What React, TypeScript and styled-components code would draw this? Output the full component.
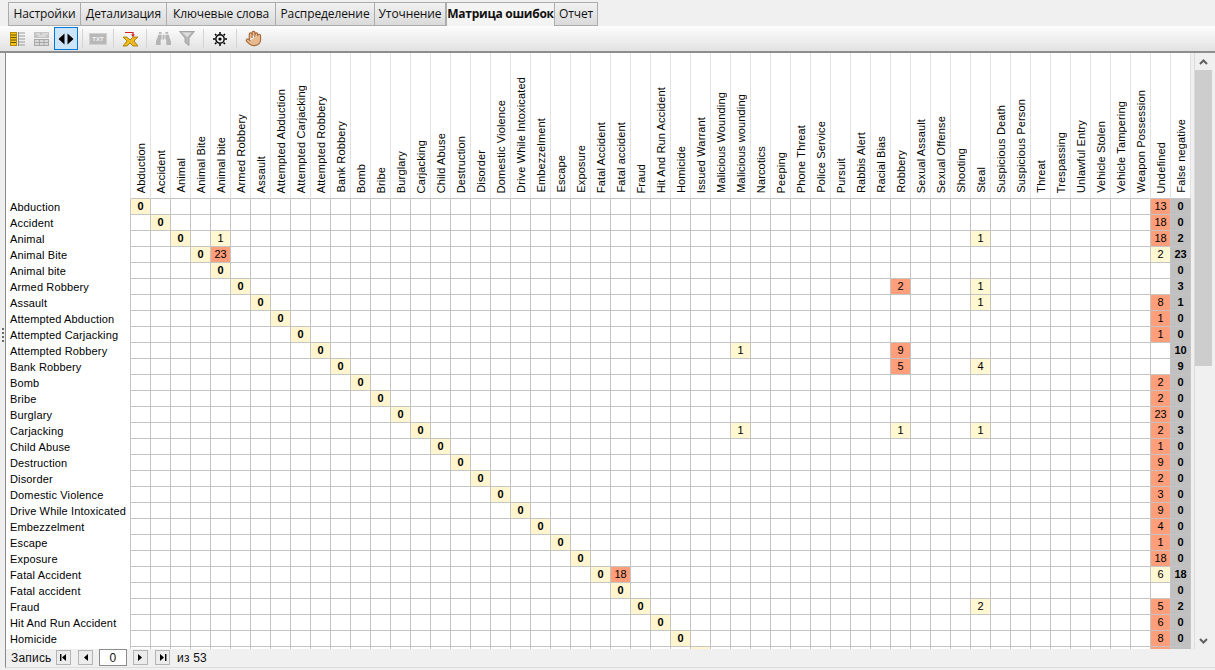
// App.tsx
import React from 'react';
import styled, { createGlobalStyle } from 'styled-components';
import { Hand } from 'lucide-react';
import { FaBinoculars } from 'react-icons/fa';

const GlobalStyle = createGlobalStyle`
  html, body {
    margin: 0;
    padding: 0;
    height: 100%;
    background: #f0f0f0;
    overflow: hidden;
  }
`;

const Page = styled.div`
  width: 1215px;
  height: 670px;
  display: flex;
  flex-direction: column;
  background: #f0f0f0;
  color: #000;
  font-family: "Liberation Sans", Arial, sans-serif;
  overflow: hidden;
`;

const TabBar = styled.div`
  display: flex;
  height: 24px;
  padding: 2px 0 0 8px;
  box-sizing: content-box;
`;

const Tab = styled.div<{ $active?: boolean; $width: number }>`
  width: ${({ $width }) => $width}px;
  box-sizing: border-box;
  height: 24px;
  border: 1px solid #acacac;
  border-left-width: ${({ $active }) => ($active ? 1 : 0)}px;
  border-bottom-width: ${({ $active }) => ($active ? 0 : 1)}px;
  background: ${({ $active }) => ($active ? '#f4f4f4' : 'linear-gradient(#f2f2f2, #dadada)')};
  font-family: "Open Sans", sans-serif;
  font-size: 12px;
  font-weight: ${({ $active }) => ($active ? 700 : 400)};
  letter-spacing: ${({ $active }) => ($active ? '-0.25px' : '-0.1px')};
  line-height: 22px;
  text-align: center;
  white-space: nowrap;
  color: #111;

  &:first-child {
    border-left-width: 1px;
  }
`;

const Toolbar = styled.div`
  display: flex;
  align-items: center;
  height: 25px;
  padding-left: 6px;
  background: linear-gradient(#fdfdfd, #e2e2e2);
  border-bottom: 2px solid #8e8e8e;
`;

const ToolButton = styled.div<{ $active?: boolean; $width?: number }>`
  width: ${({ $width }) => $width ?? 24}px;
  height: 23px;
  box-sizing: border-box;
  display: flex;
  align-items: center;
  justify-content: center;
  border: ${({ $active }) => ($active ? '1px solid #0078d7' : '1px solid transparent')};
  background: ${({ $active }) => ($active ? '#cce4f7' : 'transparent')};
`;

const ToolSeparator = styled.div<{ $gap?: number }>`
  width: 1px;
  height: 19px;
  margin: 0 ${({ $gap }) => $gap ?? 4}px;
  background: #d4d4d4;
`;

const TxtBadge = styled.div`
  width: 16px;
  height: 10px;
  background: #b8b8b8;
  border: 1px solid #d0d0d0;
  color: #f4f4f4;
  font-size: 6px;
  font-weight: 700;
  line-height: 10px;
  text-align: center;
`;

const Body = styled.div`
  flex: 1;
  display: flex;
  min-height: 0;
`;

const Gutter = styled.div`
  width: 6px;
  padding: 275px 0 0 2px;
  box-sizing: border-box;
  display: flex;
  flex-direction: column;
  gap: 2px;
`;

const GripDot = styled.div`
  width: 2px;
  height: 2px;
  background: #6a6a6a;
`;

const Content = styled.div`
  width: 1209px;
  height: 614px;
  display: flex;
  flex-direction: column;
  border-left: 1px solid #8a8a8a;
  border-bottom: 1px solid #dcdcdc;
`;

const Main = styled.div`
  height: 596px;
  display: flex;
  background: #fff;
  overflow: hidden;
`;

const Matrix = styled.div`
  width: 1185px;
  display: grid;
  grid-template-columns: 125px repeat(53, 20px);
  grid-template-rows: 146px;
  grid-auto-rows: 16px;
  overflow: hidden;
  font-size: 11px;
  letter-spacing: 0.15px;
`;

const Corner = styled.div`
  border-right: 1px solid #e2e2e2;
`;

const ColumnHead = styled.div`
  box-sizing: border-box;
  display: flex;
  align-items: center;
  justify-content: flex-end;
  flex-direction: column;
  padding-bottom: 5px;
  border-right: 1px solid #e2e2e2;
  border-bottom: 1px solid #c4c4c4;
  overflow: hidden;
`;

const ColumnTitle = styled.span`
  writing-mode: vertical-rl;
  transform: rotate(180deg);
  white-space: nowrap;
  line-height: 18px;
`;

const RowLabel = styled.div`
  box-sizing: border-box;
  padding-left: 4px;
  line-height: 16px;
  white-space: nowrap;
  overflow: hidden;
  border-right: 1px solid #c4c4c4;
`;

type Tone = 'plain' | 'diag' | 'low' | 'high' | 'miss';

const toneColors: Record<Tone, string> = {
  plain: '#fff',
  diag: '#fff6cf',
  low: '#fff8d2',
  high: '#ff9e7a',
  miss: '#c0c0c0',
};

const Cell = styled.div<{ $tone: Tone }>`
  box-sizing: border-box;
  border-right: 1px solid #c4c4c4;
  border-bottom: 1px solid #c4c4c4;
  background: ${({ $tone }) => toneColors[$tone]};
  font-weight: ${({ $tone }) => ($tone === 'diag' || $tone === 'miss' ? 700 : 400)};
  line-height: 15px;
  text-align: center;
  white-space: nowrap;
  letter-spacing: 0;
`;

const Scrollbar = styled.div`
  width: 24px;
  display: flex;
  background: #f0f0f0;
  border-left: 0;
`;

const ScrollInner = styled.div`
  margin-left: 3px;
  width: 17px;
  border-left: 1px solid #dcdcdc;
  display: flex;
  flex-direction: column;
`;

const ScrollArrow = styled.div`
  height: 17px;
  display: flex;
  align-items: center;
  justify-content: center;
`;

const ScrollThumb = styled.div`
  height: 296px;
  background: #cdcdcd;
`;

const ScrollTrack = styled.div`
  flex: 1;
`;

const Footer = styled.div`
  height: 17px;
  display: flex;
  align-items: center;
  padding-left: 5px;
  font-size: 12px;
  letter-spacing: 0.2px;
  color: #111;
`;

const FooterLabel = styled.span<{ $width: number }>`
  width: ${({ $width }) => $width}px;
  white-space: nowrap;
`;

const NavButton = styled.div<{ $gap?: number }>`
  width: 15px;
  height: 15px;
  box-sizing: border-box;
  margin-right: ${({ $gap }) => $gap ?? 7}px;
  display: flex;
  align-items: center;
  justify-content: center;
  background: #ececec;
  border: 1px solid #b4b4b4;
`;

const RecordInput = styled.div`
  width: 28px;
  height: 17px;
  box-sizing: border-box;
  margin-right: 6px;
  background: #fff;
  border: 1px solid #8c8c8c;
  text-align: center;
  line-height: 17px;
`;

const tabs: { title: string; width: number; active?: boolean }[] = [
  { title: 'Настройки', width: 73 },
  { title: 'Детализация', width: 86 },
  { title: 'Ключевые слова', width: 109 },
  { title: 'Распределение', width: 99 },
  { title: 'Уточнение', width: 71 },
  { title: 'Матрица ошибок', width: 109, active: true },
  { title: 'Отчет', width: 43 },
];

const classes = [
  'Abduction', 'Accident', 'Animal', 'Animal Bite', 'Animal bite', 'Armed Robbery', 'Assault',
  'Attempted Abduction', 'Attempted Carjacking', 'Attempted Robbery', 'Bank Robbery', 'Bomb', 'Bribe',
  'Burglary', 'Carjacking', 'Child Abuse', 'Destruction', 'Disorder', 'Domestic Violence',
  'Drive While Intoxicated', 'Embezzelment', 'Escape', 'Exposure', 'Fatal Accident', 'Fatal accident',
  'Fraud', 'Hit And Run Accident', 'Homicide', 'Issued Warrant', 'Malicious Wounding', 'Malicious wounding',
  'Narcotics', 'Peeping', 'Phone Threat', 'Police Service', 'Pursuit', 'Rabbis Alert', 'Racial Bias',
  'Robbery', 'Sexual Assault', 'Sexual Offense', 'Shooting', 'Steal', 'Suspicious Death', 'Suspicious Person',
  'Threat', 'Trespassing', 'Unlawful Entry', 'Vehicle Stolen', 'Vehicle Tampering', 'Weapon Possession',
  'Undefined', 'False negative',
];

const UNDEFINED = 51;
const MISSED = 52;

// row -> column -> [value, tone]; the diagonal is added below
const errors: Record<number, Record<number, [number, Tone]>> = {
  0: { 51: [13, 'high'] },
  1: { 51: [18, 'high'] },
  2: { 4: [1, 'low'], 42: [1, 'low'], 51: [18, 'high'] },
  3: { 4: [23, 'high'], 51: [2, 'low'] },
  5: { 38: [2, 'high'], 42: [1, 'low'] },
  6: { 42: [1, 'low'], 51: [8, 'high'] },
  7: { 51: [1, 'high'] },
  8: { 51: [1, 'high'] },
  9: { 30: [1, 'low'], 38: [9, 'high'] },
  10: { 38: [5, 'high'], 42: [4, 'low'] },
  11: { 51: [2, 'high'] },
  12: { 51: [2, 'high'] },
  13: { 51: [23, 'high'] },
  14: { 30: [1, 'low'], 38: [1, 'low'], 42: [1, 'low'], 51: [2, 'high'] },
  15: { 51: [1, 'high'] },
  16: { 51: [9, 'high'] },
  17: { 51: [2, 'high'] },
  18: { 51: [3, 'high'] },
  19: { 51: [9, 'high'] },
  20: { 51: [4, 'high'] },
  21: { 51: [1, 'high'] },
  22: { 51: [18, 'high'] },
  23: { 24: [18, 'high'], 51: [6, 'low'] },
  25: { 42: [2, 'low'], 51: [5, 'high'] },
  26: { 51: [6, 'high'] },
  27: { 51: [8, 'high'] },
};

const missed = [0, 0, 2, 23, 0, 3, 1, 0, 0, 10, 9, 0, 0, 0, 3, 0, 0, 0, 0, 0, 0, 0, 0, 18, 0, 2, 0, 0, 0];

const rows = classes.slice(0, 29);

const TableIcon = () => (
  <svg width="16" height="14" viewBox="0 0 16 14">
    <rect x="0.5" y="0.5" width="6" height="13" fill="#f5c518" stroke="#b58a00" />
    <path d="M1 3h5M1 5.5h5M1 8h5M1 10.5h5" stroke="#6b5200" />
    <path d="M9 1h6M9 4h6M9 7h6M9 10h6M9 13h6" stroke="#9a9a9a" />
    <path d="M8.5 0v14" stroke="#8a8a8a" />
  </svg>
);

const GridIcon = () => (
  <svg width="16" height="14" viewBox="0 0 16 14">
    <rect x="0" y="0" width="15" height="6" fill="#c4c4c4" />
    <path d="M2 2h4M8 2h6M4 4h8" stroke="#eeeeee" />
    <rect x="0.5" y="7.5" width="14" height="6" fill="#d8d8d8" stroke="#a8a8a8" />
    <path d="M1 10.5h13M5.5 8v5M10 8v5" stroke="#a8a8a8" />
  </svg>
);

const ArrowsIcon = () => (
  <svg width="16" height="12" viewBox="0 0 16 12">
    <path d="M6.5 0.5v11L0.5 6zM9.5 0.5v11l6-5.5z" fill="#000" />
  </svg>
);

const MergeIcon = () => (
  <svg width="17" height="17" viewBox="0 0 17 17">
    <path d="M1 7l4 0 3 3 3-3 5 0-4 4 4 5-5 0-3-3-3 3-4 0 4-5z" fill="#f0b820" stroke="#9a7400" strokeWidth="0.8" />
    <path d="M3 2.5h8v3" fill="none" stroke="#d02020" strokeWidth="1.2" />
    <path d="M9 4.5h4l-2 2.5z" fill="#d02020" />
  </svg>
);

const FunnelIcon = () => (
  <svg width="16" height="15" viewBox="0 0 16 15">
    <path d="M0.5 0.5h15L10 7v7.5l-4-3V7z" fill="#b8b8b8" stroke="#a4a4a4" />
    <path d="M3 1.5h9L8.5 6z" fill="#dedede" />
  </svg>
);

const TargetIcon = () => (
  <svg width="14" height="14" viewBox="0 0 14 14">
    <circle cx="7" cy="7" r="4.2" fill="none" stroke="#000" strokeWidth="1.4" />
    <circle cx="7" cy="7" r="1.6" fill="#000" />
    <path
      d="M7 0v2M7 12v2M0 7h2M12 7h2M2 2l1.4 1.4M10.6 10.6L12 12M12 2l-1.4 1.4M2 12l1.4-1.4"
      stroke="#000"
      strokeWidth="1.5"
    />
  </svg>
);

const Chevron = ({ up }: { up?: boolean }) => (
  <svg width="9" height="6" viewBox="0 0 9 6">
    <path d={up ? 'M1 5l3.5-3.5L8 5' : 'M1 1l3.5 3.5L8 1'} fill="none" stroke="#606060" strokeWidth="2" />
  </svg>
);

const NavGlyph = ({ dir, edge }: { dir: 'left' | 'right'; edge?: boolean }) => (
  <svg width="9" height="9" viewBox="0 0 9 9">
    {dir === 'left' ? <path d="M7 1v7L3 4.5z" fill="#000" /> : <path d="M2 1v7l4-3.5z" fill="#000" />}
    {edge && <rect x={dir === 'left' ? 1 : 7} y="1" width="1.4" height="7" fill="#000" />}
  </svg>
);

const App: React.FC = () => {
  return (
    <>
      <GlobalStyle />
      <Page>
        <TabBar>
          {tabs.map(t => (
            <Tab key={t.title} $width={t.width} $active={t.active}>
              {t.title}
            </Tab>
          ))}
        </TabBar>
        <Toolbar>
          <ToolButton><TableIcon /></ToolButton>
          <ToolButton><GridIcon /></ToolButton>
          <ToolButton $active><ArrowsIcon /></ToolButton>
          <ToolSeparator />
          <ToolButton $width={22}><TxtBadge>TXT</TxtBadge></ToolButton>
          <ToolSeparator />
          <ToolButton><MergeIcon /></ToolButton>
          <ToolSeparator />
          <ToolButton><FaBinoculars size={15} color="#b4b4b4" /></ToolButton>
          <ToolButton><FunnelIcon /></ToolButton>
          <ToolSeparator />
          <ToolButton><TargetIcon /></ToolButton>
          <ToolSeparator />
          <ToolButton><Hand size={17} color="#a8693a" fill="#e6b98e" strokeWidth={1.6} /></ToolButton>
        </Toolbar>
        <Body>
          <Gutter>
            <GripDot />
            <GripDot />
            <GripDot />
            <GripDot />
          </Gutter>
          <Content>
            <Main>
              <Matrix>
                <Corner />
                {classes.map(name => (
                  <ColumnHead key={name}>
                    <ColumnTitle>{name}</ColumnTitle>
                  </ColumnHead>
                ))}
                {rows.map((name, r) => (
                  <React.Fragment key={name}>
                    <RowLabel>{name}</RowLabel>
                    {classes.map((col, c) => {
                      const hit = errors[r]?.[c];
                      if (c === MISSED) return <Cell key={col} $tone="miss">{missed[r]}</Cell>;
                      if (c === r) return <Cell key={col} $tone="diag">0</Cell>;
                      if (hit) return <Cell key={col} $tone={hit[1]}>{hit[0]}</Cell>;
                      if (c === UNDEFINED && r === 28) return <Cell key={col} $tone="high" />;
                      return <Cell key={col} $tone="plain" />;
                    })}
                  </React.Fragment>
                ))}
              </Matrix>
              <Scrollbar>
                <ScrollInner>
                  <ScrollArrow><Chevron up /></ScrollArrow>
                  <ScrollThumb />
                  <ScrollTrack />
                  <ScrollArrow><Chevron /></ScrollArrow>
                </ScrollInner>
              </Scrollbar>
            </Main>
            <Footer>
              <FooterLabel $width={45}>Запись</FooterLabel>
              <NavButton><NavGlyph dir="left" edge /></NavButton>
              <NavButton $gap={6}><NavGlyph dir="left" /></NavButton>
              <RecordInput>0</RecordInput>
              <NavButton><NavGlyph dir="right" /></NavButton>
              <NavButton><NavGlyph dir="right" edge /></NavButton>
              <FooterLabel $width={40}>из 53</FooterLabel>
            </Footer>
          </Content>
        </Body>
      </Page>
    </>
  );
};

export default App;
